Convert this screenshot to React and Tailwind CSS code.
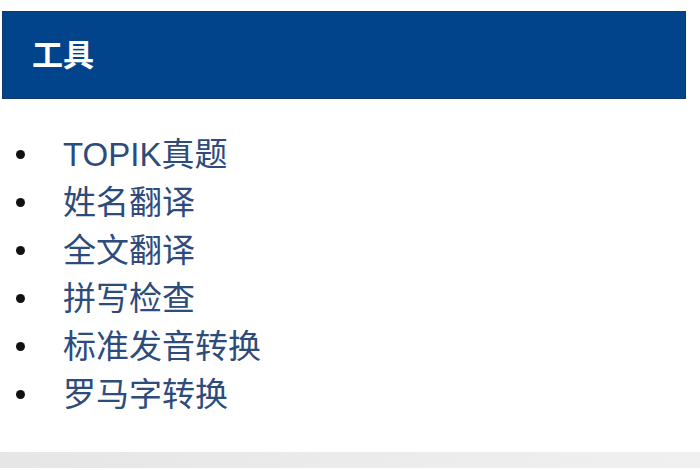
const tools = ['TOPIK真题', '姓名翻译', '全文翻译', '拼写检查', '标准发音转换', '罗马字转换'];

export default function App() {
  return (
    <div
      className="w-[700px] h-[470px] bg-white flex flex-col overflow-hidden"
      style={{ fontFamily: '"Liberation Sans", "Noto Sans CJK SC", sans-serif' }}
    >
      <div className="mt-[11px] ml-[2px] w-[684px] h-[88px] bg-[#02448c] border border-[#16396b] flex items-center pl-[29px]">
        <span className="text-white text-[31px] font-bold leading-none">工具</span>
      </div>
      <ul className="mt-[31px] flex flex-col">
        {tools.map((t) => (
          <li key={t} className="h-[48px] flex items-center">
            <span className="ml-[16px] w-[9px] h-[9px] rounded-full bg-[#111]" />
            <a className="ml-[38px] text-[33px] leading-none text-[#2d4b7b]">{t}</a>
          </li>
        ))}
      </ul>
      <div className="flex-1" />
      <div className="h-[16px] mb-[2px] bg-gradient-to-r from-[#e6e6e6] to-[#f0f0f0]" />
    </div>
  );
}
